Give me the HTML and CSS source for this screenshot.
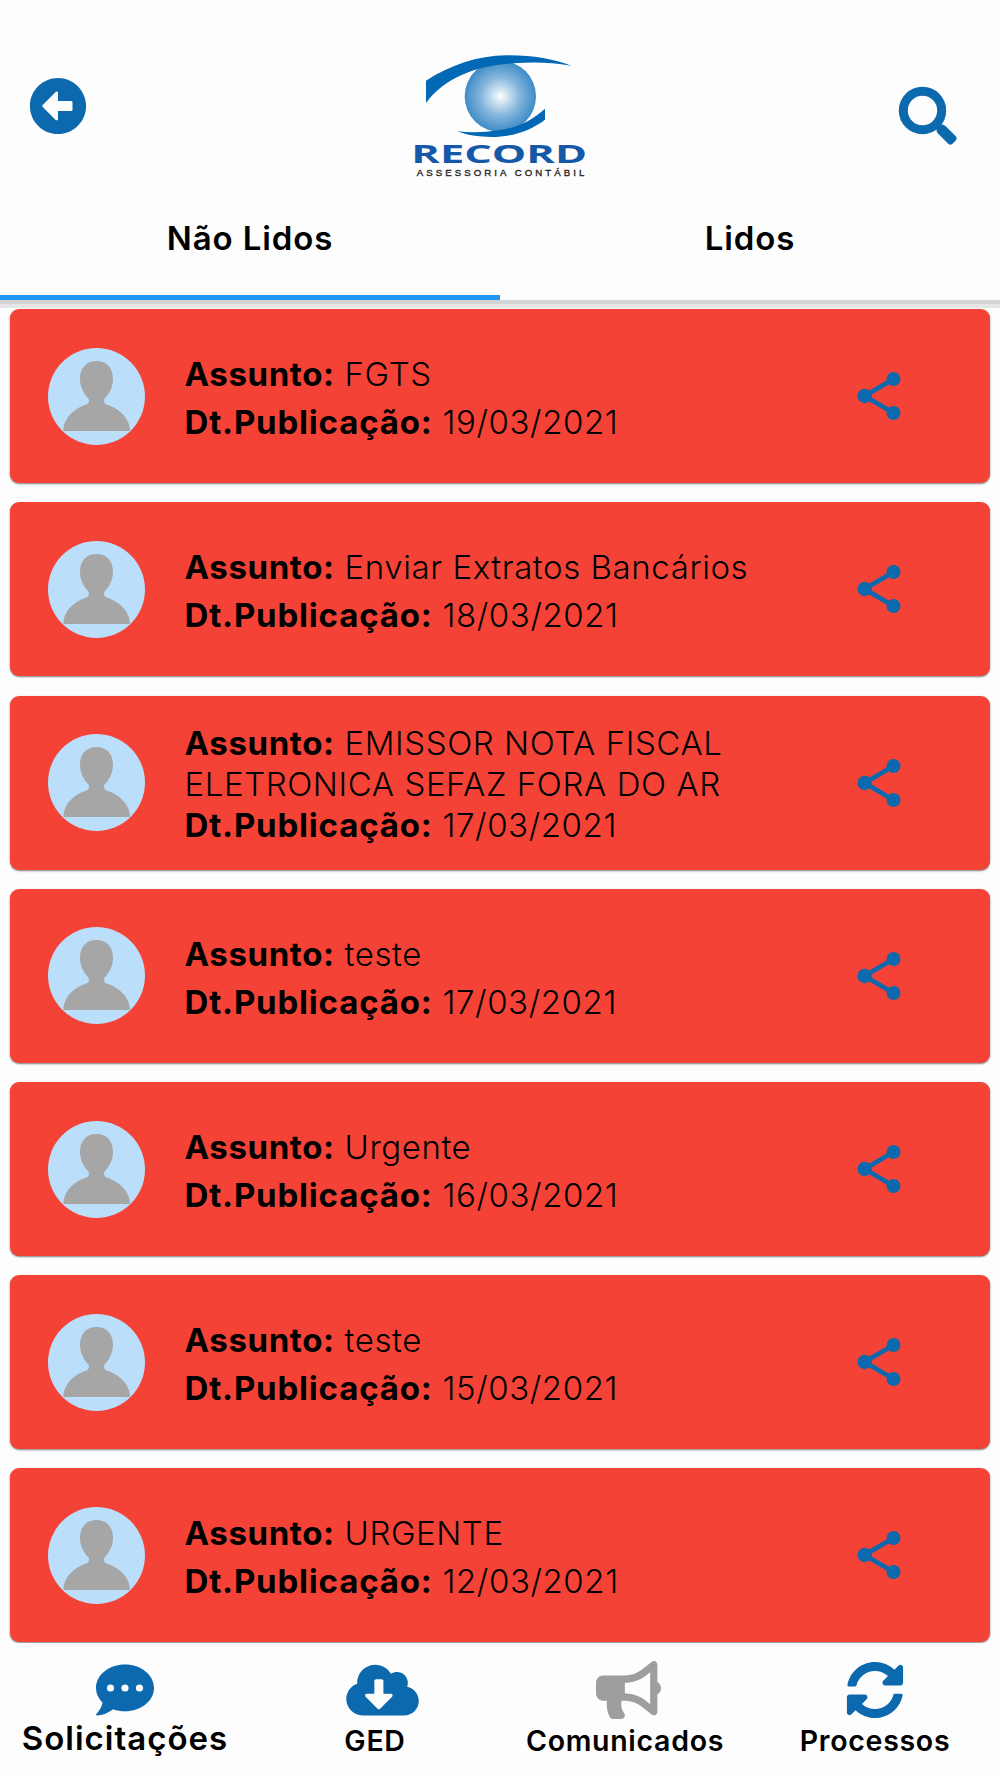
FILE: index.html
```html
<!DOCTYPE html>
<html lang="pt-BR">
<head>
    <meta charset="UTF-8">
    <meta name="viewport" content="width=device-width, initial-scale=1.0">
    <title>Comunicados</title>
    <link rel="stylesheet" href="styles.css">
</head>
<body>
    <svg class="sprite">
        <symbol id="user" viewBox="0 0 97 97">
            <path d="M48.500 13C38 13 32 20 32 31C32 39 36 46 40.500 50.500C41.500 53 41 55.500 38.500 56.500C26 60.500 15.500 70 15.500 83H82C82 70 71 60.500 58.500 56.500C56 55.500 55.500 53 56.500 50.500C61 46 65 39 65 31C65 20 59 13 48.500 13Z"/>
        </symbol>
        <symbol id="share" viewBox="0 0 44 48">
            <path d="M36.500 7L7.600 24L36.500 41" fill="none" stroke="#0d69ae" stroke-width="4.800"/>
            <circle cx="36.500" cy="7" r="7"/>
            <circle cx="7.600" cy="24" r="7.200"/>
            <circle cx="36.500" cy="41" r="7"/>
        </symbol>
    </svg>

    <header>
        <div class="topbar">
            <svg class="back" viewBox="0 0 512 512"><path d="M256 504C119 504 8 393 8 256S119 8 256 8s248 111 248 248-111 248-248 248zm116-292H256v-70.900c0-10.700-13-16.100-20.500-8.500L121.200 247.500c-4.700 4.700-4.700 12.200 0 16.900l114.300 114.900c7.600 7.600 20.500 2.200 20.500-8.500V300h116c6.600 0 12-5.400 12-12v-64c0-6.600-5.400-12-12-12z"/></svg>
            <svg class="logo" viewBox="0 0 660 450">
                <defs>
                    <radialGradient id="iris">
                        <stop offset="0" stop-color="#fff"/>
                        <stop offset=".12" stop-color="#e2eef7"/>
                        <stop offset=".55" stop-color="#84b5dc"/>
                        <stop offset="1" stop-color="#3d8cc6"/>
                    </radialGradient>
                </defs>
                <circle cx="331" cy="169" r="107" fill="url(#iris)"/>
                <path class="halo" d="M108 189C150 138 195 105 256 92L236 112L180 150Z"/>
                <path d="M108 122C180 76 262 47 350 46C425 45 490 57 544 77C480 66 425 66 370 70C255 78 165 113 108 189Z"/>
                <path d="M202 274C245 279 285 277 325 271C380 263 425 243 465 206V239C420 273 365 291 305 291C265 291 230 285 202 274Z"/>
                <text class="brand" x="64" y="370" textLength="527" lengthAdjust="spacingAndGlyphs">RECORD</text>
                <text class="tagline" x="80" y="409" textLength="503">ASSESSORIA CONTÁBIL</text>
            </svg>
            <svg class="search" viewBox="0 0 60 60">
                <circle cx="24.500" cy="24.500" r="19.200" fill="none" stroke="#0d69ae" stroke-width="9"/>
                <path d="M36 36L42 42" stroke="#0d69ae" stroke-width="5"/>
                <path d="M38.500 41.500Q38.500 39 41 38.800L44 38.500Q46 38.500 47.500 40L58 50.500Q59.500 52.300 58 54.200L54.500 57.700Q52.500 59.700 50.500 58L40 47.500Q38.500 46 38.500 44Z"/>
            </svg>
        </div>
        <nav class="tabs">
            <a class="tab active">Não Lidos</a>
            <a class="tab">Lidos</a>
        </nav>
    </header>

    <main class="list">
        <div class="card">
            <div class="avatar"><svg><use href="#user"/></svg></div>
            <div class="info">
                <p><b>Assunto:</b> FGTS</p>
                <p><b class="date">Dt.Publicação:</b> 19/03/2021</p>
            </div>
            <svg class="share"><use href="#share"/></svg>
        </div>
        <div class="card">
            <div class="avatar"><svg><use href="#user"/></svg></div>
            <div class="info">
                <p><b>Assunto:</b> Enviar Extratos Bancários</p>
                <p><b class="date">Dt.Publicação:</b> 18/03/2021</p>
            </div>
            <svg class="share"><use href="#share"/></svg>
        </div>
        <div class="card">
            <div class="avatar"><svg><use href="#user"/></svg></div>
            <div class="info long">
                <p><b>Assunto:</b> EMISSOR NOTA FISCAL ELETRONICA SEFAZ FORA DO AR</p>
                <p><b class="date">Dt.Publicação:</b> 17/03/2021</p>
            </div>
            <svg class="share"><use href="#share"/></svg>
        </div>
        <div class="card">
            <div class="avatar"><svg><use href="#user"/></svg></div>
            <div class="info">
                <p><b>Assunto:</b> teste</p>
                <p><b class="date">Dt.Publicação:</b> 17/03/2021</p>
            </div>
            <svg class="share"><use href="#share"/></svg>
        </div>
        <div class="card">
            <div class="avatar"><svg><use href="#user"/></svg></div>
            <div class="info">
                <p><b>Assunto:</b> Urgente</p>
                <p><b class="date">Dt.Publicação:</b> 16/03/2021</p>
            </div>
            <svg class="share"><use href="#share"/></svg>
        </div>
        <div class="card">
            <div class="avatar"><svg><use href="#user"/></svg></div>
            <div class="info">
                <p><b>Assunto:</b> teste</p>
                <p><b class="date">Dt.Publicação:</b> 15/03/2021</p>
            </div>
            <svg class="share"><use href="#share"/></svg>
        </div>
        <div class="card">
            <div class="avatar"><svg><use href="#user"/></svg></div>
            <div class="info">
                <p><b>Assunto:</b> URGENTE</p>
                <p><b class="date">Dt.Publicação:</b> 12/03/2021</p>
            </div>
            <svg class="share"><use href="#share"/></svg>
        </div>
    </main>

    <footer>
        <a class="item big">
            <svg class="chat" viewBox="0 0 58 52"><path fill-rule="evenodd" d="M29 .500C45 .500 58 11 58 24S45 47.300 29 47.300C24.800 47.300 20.800 46.600 17.200 45.200C12 49 6.500 51.500 1 51.500C0 51.500 0 50.500 .500 49.800C3.500 46.500 6 42.500 6.500 38.500C2.500 34.500 0 29.500 0 24C0 11 13 .500 29 .500ZM14.500 20.400a3.600 3.600 0 1 0 0 7.200a3.600 3.600 0 1 0 0-7.200ZM29 20.400a3.600 3.600 0 1 0 0 7.200a3.600 3.600 0 1 0 0-7.200ZM43.500 20.400a3.600 3.600 0 1 0 0 7.200a3.600 3.600 0 1 0 0-7.200Z"/></svg>
            <span>Solicitações</span>
        </a>
        <a class="item">
            <svg class="cloud" viewBox="0 0 640 512"><path d="M537.600 226.600c4.100-10.700 6.400-22.400 6.400-34.600 0-53-43-96-96-96-19.700 0-38.100 6-53.300 16.200C367 64.200 315.300 32 256 32c-88.400 0-160 71.600-160 160 0 2.700.1 5.400.2 8.100C40.200 219.800 0 273.200 0 336c0 79.500 64.500 144 144 144h368c70.700 0 128-57.300 128-128 0-61.900-44-113.600-102.400-125.400zm-132.900 88.700L299.300 420.700c-6.200 6.200-16.400 6.200-22.600 0L171.300 315.300c-10.100-10.100-2.900-27.300 11.300-27.300H248V176c0-8.800 7.200-16 16-16h48c8.800 0 16 7.200 16 16v112h65.400c14.200 0 21.400 17.200 11.300 27.300z"/></svg>
            <span>GED</span>
        </a>
        <a class="item">
            <svg class="horn" viewBox="0 0 576 512"><path d="M576 240c0-23.630-12.950-44.040-32-55.120V32.010C544 23.260 537.020 0 512 0c-7.120 0-14.190 2.380-19.980 7.020l-85.030 68.030C364.280 109.190 310.660 128 256 128H64c-35.350 0-64 28.650-64 64v96c0 35.350 28.650 64 64 64h33.700c-1.390 10.480-2.180 21.140-2.180 32 0 39.770 9.260 77.350 25.560 110.940 5.190 10.690 16.520 17.060 28.400 17.060h74.280c26.050 0 41.690-29.840 25.900-50.560-16.400-21.520-26.150-48.360-26.150-77.440 0-11.110 1.620-21.790 4.410-32H256c54.660 0 108.280 18.810 150.980 52.950l85.030 68.030a32.023 32.023 0 0 0 19.980 7.020c24.920 0 32-22.780 32-32V295.130C563.050 284.040 576 263.630 576 240zm-96 141.420l-33.050-26.440C392.950 311.780 325.120 288 256 288v-96c69.120 0 136.950-23.780 190.950-66.980L480 98.580v282.840z"/></svg>
            <span>Comunicados</span>
        </a>
        <a class="item">
            <svg class="sync" viewBox="0 0 512 512"><path d="M370.720 133.280C339.458 104.008 298.888 87.962 255.848 88c-77.458.068-144.328 53.178-162.791 126.850-1.344 5.363-6.122 9.150-11.651 9.150H24.103c-7.498 0-13.194-6.807-11.807-14.176C33.933 94.924 134.813 8 256 8c66.448 0 126.791 26.136 171.315 68.685L463.030 40.970C478.149 25.851 504 36.559 504 57.941V192c0 13.255-10.745 24-24 24H345.941c-21.382 0-32.090-25.851-16.971-40.971l41.750-41.749zM32 296h134.059c21.382 0 32.090 25.851 16.971 40.971l-41.750 41.750c31.262 29.273 71.835 45.319 114.876 45.280 77.418-.070 144.315-53.144 162.787-126.849 1.344-5.363 6.122-9.150 11.651-9.150h57.304c7.498 0 13.194 6.807 11.807 14.176C478.067 417.076 377.187 504 256 504c-66.448 0-126.791-26.136-171.315-68.685L48.970 471.030C33.851 486.149 8 475.441 8 454.059V320c0-13.255 10.745-24 24-24z"/></svg>
            <span>Processos</span>
        </a>
    </footer>
</body>
</html>
```
FILE: styles.css
```css
*{padding: 0; margin: 0; box-sizing: border-box;}
body {display: flex; flex-direction: column; height: 1778px; overflow: hidden; background: #fdfdfd; color: #000; font-family: Inter, "Liberation Sans", sans-serif;}
svg {display: block; fill: #0d69ae;}
.sprite {position: absolute; width: 0; height: 0;}

header {flex: none; height: 300px; background: #fdfdfd;}
.topbar {display: flex; justify-content: space-between; align-items: flex-start; height: 190px; padding: 40px 42px 0 29px;}
.back {width: 58px; height: 58px; margin-top: 37px;}
.logo {width: 220px; height: 150px; margin-left: 14px; fill: #0068b4;}
.logo .halo {fill: #fdfdfd;}
.brand {font: bold 73px "Open Sans", sans-serif; fill: #1558a7;}
.tagline {font: 29px "Liberation Sans", sans-serif; fill: #222; stroke: #222; stroke-width: 1px;}
.search {width: 60px; height: 60px; margin-top: 46px;}

.tabs {display: flex; height: 110px; box-shadow: 0 4px 0 #d4d4d4, 0 8px 0 #e6e6e6;}
.tab {flex: 1; padding-top: 27px; text-align: center; font-size: 33px; line-height: 42px; font-weight: 600; letter-spacing: .9px;}
.tab.active {border-bottom: 5px solid #2196f3;}

.list {flex: none; display: flex; flex-direction: column; gap: 19.200px; height: 1342.600px; padding: 9.300px 10px 0; overflow: hidden;}
.card {flex: none; display: flex; align-items: center; height: 174px; padding: 0 89px 0 38px; background: #f44336; border-radius: 9px; box-shadow: 0 1px 2px rgba(0,0,0,.5);}
.avatar {flex: none; width: 97px; height: 97px; margin-right: 39.500px; border-radius: 50%; background: #bbdefb; overflow: hidden;}
.avatar svg {width: 97px; height: 97px; fill: #a6a6a6;}
.info {flex: 1; padding: 4px 80px 0 0; font-size: 33px; line-height: 48.300px; font-weight: 300; letter-spacing: .580px;}
.info b {font-weight: 700; letter-spacing: .6px;}
.info .date {letter-spacing: .820px;}
.info.long {line-height: 41px;}
.share {flex: none; width: 44px; height: 48px;}

footer {flex: none; display: flex; height: 135px; background: #fdfdfd;}
.item {width: 250px; display: flex; flex-direction: column; align-items: center; padding-top: 18px; font-size: 28.500px; line-height: 36px; font-weight: 600; letter-spacing: .7px;}
.item span {margin-top: auto; margin-bottom: 19px;}
.item.big {font-size: 33px; letter-spacing: 1px;}
.big span {margin-bottom: 22px;}
.chat {width: 58px; height: 52px; margin-top: 3px;}
.cloud {width: 73px; height: 58px; margin-left: 14px;}
.horn {width: 65px; height: 58px; margin-left: 7px; fill: #9e9e9e;}
.sync {width: 58px; height: 58px;}
```
